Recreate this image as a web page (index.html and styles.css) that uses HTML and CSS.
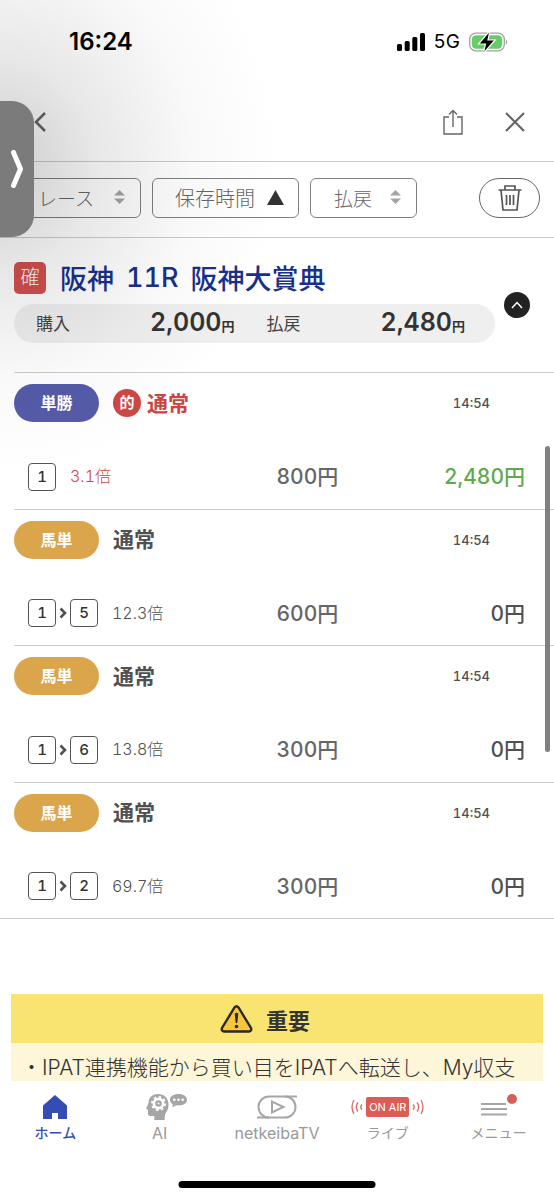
FILE: index.html
```
<!DOCTYPE html>
<html lang="ja">
<head>
    <meta charset="UTF-8">
    <meta name="viewport" content="width=device-width, initial-scale=1.0">
    <title>My収支</title>
    <link rel="stylesheet" href="styles.css">
</head>
<body>
    <div class="status-bar">
        <span class="clock">16:24</span>
        <div class="status-icons">
            <svg width="28" height="18" viewBox="0 0 28 18">
                <rect x="0" y="11" width="5" height="7" rx="1.5"/>
                <rect x="7.7" y="8" width="5" height="10" rx="1.5"/>
                <rect x="15.3" y="4" width="5" height="14" rx="1.5"/>
                <rect x="23" y="0" width="5" height="18" rx="1.5"/>
            </svg>
            <span class="network">5G</span>
            <svg width="39" height="20" viewBox="0 0 39 20">
                <rect x="0.7" y="1.2" width="34.6" height="17.6" rx="6" fill="#fff" stroke="#a2a2a2" stroke-width="1.3"/>
                <rect x="2.8" y="3.2" width="30.4" height="13.6" rx="4.2" fill="#66cc6a"/>
                <path d="M36.8 7.2c1.8 1 1.8 4.6 0 5.6z" fill="#a2a2a2"/>
                <path d="M20 .8 10.8 11.4h6.4L15.4 19.2 24.8 8.6h-6.6z" stroke="#fff" stroke-width="2.4" paint-order="stroke"/>
            </svg>
        </div>
    </div>

    <header class="header">
        <button class="icon-button" aria-label="戻る">
            <svg width="12" height="20" viewBox="0 0 12 20" class="line"><path d="M11 1 2 10l9 9" stroke-width="2.6"/></svg>
        </button>
        <div class="header-actions">
            <button class="icon-button" aria-label="共有">
                <svg width="20" height="26" viewBox="0 0 20 26" class="line"><path d="M6 8H1v17h18V8h-5M10 18V1.500M6 5.500l4-4 4 4" stroke-width="1.4"/></svg>
            </button>
            <button class="icon-button" aria-label="閉じる">
                <svg width="20" height="20" viewBox="0 0 20 20" class="line"><path d="m1 1 18 18M19 1 1 19" stroke-width="2.2"/></svg>
            </button>
        </div>
    </header>

    <div class="filters">
        <button class="filter filter-narrow">レース
            <svg width="11" height="14" viewBox="0 0 11 14" fill="#a5a5a5"><path d="M0 5.500 5.500 0 11 5.500zM0 8.500h11L5.500 14z"/></svg>
        </button>
        <button class="filter filter-wide">保存時間
            <svg width="17" height="15" viewBox="0 0 17 15" fill="#333"><path d="M8.500 0 17 15H0z"/></svg>
        </button>
        <button class="filter">払戻
            <svg width="11" height="14" viewBox="0 0 11 14" fill="#a5a5a5"><path d="M0 5.500 5.500 0 11 5.500zM0 8.500h11L5.500 14z"/></svg>
        </button>
        <button class="trash" aria-label="削除">
            <svg width="24" height="26" viewBox="0 0 24 26" class="line"><path d="M.5 5h23M7 5V1h10v4M3 5l2 20h14l2-20M8.500 10v10M12 10v10M15.500 10v10" stroke-width="1.7"/></svg>
        </button>
    </div>

    <main class="content">
        <section class="race">
            <div class="race-info">
                <h1>
                    <span class="fixed-mark">確</span>
                    <span>阪神</span>
                    <span>11R</span>
                    <span>阪神大賞典</span>
                </h1>
                <dl class="totals">
                    <dt>購入</dt>
                    <dd>2,000<small>円</small></dd>
                    <dt>払戻</dt>
                    <dd>2,480<small>円</small></dd>
                </dl>
            </div>
            <button class="collapse" aria-label="閉じる">
                <svg width="12" height="8" viewBox="0 0 12 8" class="line"><path d="m1 7 5-5.500L11 7" stroke-width="1.5"/></svg>
            </button>
        </section>

        <div class="bets">
            <article class="bet">
                <div class="bet-head">
                    <span class="pill win">単勝</span>
                    <span class="hit-mark">的</span>
                    <span class="kind hit">通常</span>
                    <time>14:54</time>
                </div>
                <div class="bet-detail">
                    <div class="pick"><span class="num">1</span><span class="odds hit">3.1倍</span></div>
                    <span class="amount">800円</span>
                    <span class="payout paid">2,480円</span>
                </div>
            </article>

            <article class="bet">
                <div class="bet-head">
                    <span class="pill">馬単</span>
                    <span class="kind">通常</span>
                    <time>14:54</time>
                </div>
                <div class="bet-detail">
                    <div class="pick">
                        <span class="num">1</span>
                        <svg width="8" height="12" viewBox="0 0 8 12" class="line"><path d="m1.500 1.500 4.500 4.500-4.500 4.500" stroke-width="2.6"/></svg>
                        <span class="num">5</span>
                        <span class="odds">12.3倍</span>
                    </div>
                    <span class="amount">600円</span>
                    <span class="payout">0円</span>
                </div>
            </article>

            <article class="bet">
                <div class="bet-head">
                    <span class="pill">馬単</span>
                    <span class="kind">通常</span>
                    <time>14:54</time>
                </div>
                <div class="bet-detail">
                    <div class="pick">
                        <span class="num">1</span>
                        <svg width="8" height="12" viewBox="0 0 8 12" class="line"><path d="m1.500 1.500 4.500 4.500-4.500 4.500" stroke-width="2.6"/></svg>
                        <span class="num">6</span>
                        <span class="odds">13.8倍</span>
                    </div>
                    <span class="amount">300円</span>
                    <span class="payout">0円</span>
                </div>
            </article>

            <article class="bet">
                <div class="bet-head">
                    <span class="pill">馬単</span>
                    <span class="kind">通常</span>
                    <time>14:54</time>
                </div>
                <div class="bet-detail">
                    <div class="pick">
                        <span class="num">1</span>
                        <svg width="8" height="12" viewBox="0 0 8 12" class="line"><path d="m1.500 1.500 4.500 4.500-4.500 4.500" stroke-width="2.6"/></svg>
                        <span class="num">2</span>
                        <span class="odds">69.7倍</span>
                    </div>
                    <span class="amount">300円</span>
                    <span class="payout">0円</span>
                </div>
            </article>
        </div>

        <section class="notice">
            <h2>
                <svg width="33" height="28" viewBox="0 0 33 28">
                    <path d="M14.500 2.500q2-2.400 4 0L31 23q1 3-2 3.500H4Q1 26 2 23z" fill="#f7c63f" stroke="#2b2922" stroke-width="2.400"/>
                    <path d="M14.700 8.500q1.800-1.600 3.600 0L17.300 18h-1.600z" fill="#2b2922"/>
                    <circle cx="16.500" cy="21.500" r="1.800" fill="#2b2922"/>
                </svg>
                重要
            </h2>
            <p>・IPAT連携機能から買い目をIPATへ転送し、My収支</p>
        </section>
    </main>

    <nav class="tab-bar">
        <a href="#" class="tab active">
            <span class="tab-icon">
                <svg width="24" height="24" viewBox="0 0 24 24" fill="#364cb5"><path d="M12 0 24 10.500V24h-9v-6H9v6H0V10.500z"/></svg>
            </span>
            ホーム
        </a>
        <a href="#" class="tab tab-ai">
            <span class="tab-icon">
                <svg width="41" height="28" viewBox="0 0 41 28" fill="#a6a6a6">
                    <path d="M12 1C6 1 2.500 5 2.500 10L.3 15.200c-.3.800.2 1.200 1.700 1.300v4.200c0 1.500 1 2.200 2.500 2.200h3.800V27h10.500c-.6-4 .2-6 2-8.800 1.300-2 1.700-4.200 1.700-7C22.500 5 18 1 12 1z"/>
                    <circle cx="12.500" cy="10.500" r="4.600" fill="none" stroke="#fff" stroke-width="2.600"/>
                    <circle cx="12.500" cy="10.500" r="6.600" fill="none" stroke="#fff" stroke-width="1.800" stroke-dasharray="2.600 2.580"/>
                    <circle cx="12.500" cy="10.500" r="1" fill="#fff"/>
                    <path d="M32.500 1c-5 0-8.500 2.400-8.500 5.800 0 2 1.200 3.700 3 4.700L26 14.300l5-2c6 .6 10-2 10-5.500S37.500 1 32.500 1z"/>
                    <g fill="#fff"><circle cx="28.300" cy="6.800" r="1.300"/><circle cx="32.500" cy="6.800" r="1.300"/><circle cx="36.700" cy="6.800" r="1.300"/></g>
                </svg>
            </span>
            <span class="tab-label">AI</span>
        </a>
        <a href="#" class="tab tab-latin">
            <span class="tab-icon">
                <svg width="40" height="24" viewBox="0 0 40 24" fill="none" stroke="#a6a6a6" stroke-width="2">
                    <rect x="1.500" y="1.500" width="37" height="21" rx="10.500"/>
                    <path d="M28 1.500h12M0 22.500h12"/>
                    <path d="M15 6.500v11L26.500 12z"/>
                </svg>
            </span>
            netkeibaTV
        </a>
        <a href="#" class="tab">
            <span class="tab-icon on-air">
                <svg width="12" height="16" viewBox="0 0 12 16"><path d="M3 1Q-1 8 3 15M7 3.500Q3.500 8 7 12.500M11 5.500Q8.500 8 11 10.500"/></svg>
                <span>ON AIR</span>
                <svg width="12" height="16" viewBox="0 0 12 16"><path d="M1 5.500Q3.500 8 1 10.500M5 3.500Q8.500 8 5 12.500M9 1Q13 8 9 15"/></svg>
            </span>
            ライブ
        </a>
        <a href="#" class="tab">
            <span class="tab-icon">
                <svg width="37" height="30" viewBox="0 0 37 30">
                    <path d="M1 12h25M1 17h26M1 22.500h26" stroke="#a6a6a6" stroke-width="1.800"/>
                    <circle cx="32" cy="7" r="5" fill="#d4605b"/>
                </svg>
            </span>
            メニュー
        </a>
    </nav>

    <div class="scroll-thumb"></div>
    <div class="edge-shade"></div>
    <button class="drawer-handle" aria-label="開く">
        <svg width="12" height="38" viewBox="0 0 12 38"><path d="m2.500 2.500 7 16.500-7 16.500"/></svg>
    </button>
    <div class="home-indicator"></div>
</body>
</html>
```
FILE: styles.css
```
* {
    box-sizing: border-box;
}

body {
    position: relative;
    display: flex;
    flex-direction: column;
    height: 100vh;
    margin: 0;
    overflow: hidden;
    background-color: #fff;
    color: #505050;
    font-family: Inter, "Noto Sans CJK JP", sans-serif;
    font-variant-numeric: tabular-nums;
}

h1, h2, p, dl, dd {
    margin: 0;
}

button {
    padding: 0;
    border: none;
    background: none;
    color: inherit;
    font-family: inherit;
    cursor: pointer;
}

svg {
    display: block;
    flex: none;
}

.line {
    fill: none;
    stroke: currentColor;
}

/* Status bar */
.status-bar {
    display: flex;
    flex: none;
    justify-content: space-between;
    align-items: center;
    height: 83px;
    padding: 0 46px 0 69px;
    color: #000;
}

.clock {
    font-size: 24px;
    font-weight: 600;
    font-variant-numeric: normal;
}

.status-icons {
    display: flex;
    align-items: center;
    gap: 9px;
}

.network {
    font-size: 19px;
}

/* Header */
.header {
    display: flex;
    flex: none;
    justify-content: space-between;
    align-items: center;
    height: 79px;
    padding: 0 29px 0 34px;
    border-bottom: 1px solid #ccc;
    color: #666;
}

.header-actions {
    display: flex;
    align-items: center;
    gap: 42px;
}

/* Sort buttons */
.filters {
    display: flex;
    flex: none;
    align-items: center;
    gap: 11px;
    height: 76px;
    padding: 0 14px 3px;
    border-bottom: 1px solid #ccc;
}

.filter {
    display: flex;
    justify-content: center;
    align-items: center;
    gap: 18px;
    width: 107px;
    height: 40px;
    padding: 0 0 2px 8px;
    border: 1px solid #808080;
    border-radius: 6px;
    color: #666;
    font-size: 19px;
    font-weight: 300;
}

.filter-narrow {
    width: 127px;
    gap: 20px;
}

.filter-wide {
    width: 147px;
    gap: 12px;
    font-size: 20px;
}

.trash {
    display: flex;
    justify-content: center;
    align-items: center;
    width: 61px;
    height: 40px;
    margin-left: auto;
    border: 1px solid #666;
    border-radius: 20px;
    color: #555;
}

/* Race summary */
.content {
    flex: 1;
    min-height: 0;
    overflow: hidden;
}

.race {
    display: flex;
    align-items: center;
    gap: 9px;
    height: 134px;
    padding: 0 24px 0 14px;
}

.race-info {
    flex: 1;
    padding-bottom: 10px;
}

.race h1 {
    display: flex;
    align-items: center;
    gap: 12px;
    height: 40px;
    color: #18308a;
    font-size: 27px;
    font-weight: 500;
    white-space: nowrap;
}

.race h1 .fixed-mark {
    width: 32px;
    height: 32px;
    margin-right: 2px;
    border-radius: 5px;
    background-color: #d2504d;
    color: #fff;
    font-size: 19px;
    font-weight: 300;
    line-height: 32px;
    text-align: center;
}

.totals {
    display: grid;
    grid-template-columns: auto 1fr auto 1fr;
    align-items: center;
    height: 39px;
    margin-top: 6px;
    padding: 0 30px 2px 22px;
    border-radius: 20px;
    background-color: #efefef;
}

.totals dt {
    color: #444;
    font-size: 17px;
}

.totals dd {
    color: #333;
    font-size: 25px;
    font-weight: 600;
    text-align: right;
}

.totals dd + dt {
    margin-left: 32px;
}

.totals small {
    font-size: 13px;
}

.collapse {
    display: flex;
    justify-content: center;
    align-items: center;
    width: 26px;
    height: 26px;
    border-radius: 50%;
    background-color: #222;
    color: #fff;
}

/* Bets */
.bets {
    display: grid;
    grid-auto-rows: 1fr;
    min-height: 547px;
    border-bottom: 1px solid #ccc;
}

.bet {
    margin-left: 14px;
    border-top: 1px solid #ccc;
}

.bet-head {
    display: flex;
    align-items: center;
    height: 38px;
    margin-top: 11px;
    padding-right: 64px;
}

.pill {
    width: 85px;
    margin-right: 14px;
    border-radius: 19px;
    background-color: #dba54b;
    color: #fff;
    font-size: 16px;
    font-weight: 700;
    line-height: 38px;
    text-align: center;
}

.win {
    background-color: #555ba8;
}

.hit-mark {
    width: 28px;
    margin-right: 6px;
    border-radius: 50%;
    background-color: #ce4844;
    color: #fff;
    font-size: 15px;
    font-weight: 700;
    line-height: 28px;
    text-align: center;
}

.kind {
    padding-bottom: 3px;
    font-size: 21px;
    font-weight: 700;
}

.kind.hit, .odds.hit {
    color: #cb4542;
}

.bet time {
    margin-left: auto;
    font-size: 13px;
    font-weight: 500;
}

.bet-detail {
    display: grid;
    grid-template-columns: 2fr 1fr 1fr;
    align-items: center;
    height: 30px;
    margin-top: 38px;
    padding: 0 29px 0 14px;
}

.pick {
    display: flex;
    align-items: center;
    gap: 3px;
}

.num {
    width: 28px;
    height: 28px;
    border: 1px solid #555;
    border-radius: 4px;
    color: #333;
    font-size: 15px;
    font-weight: 500;
    line-height: 26px;
    text-align: center;
}

.odds {
    margin-left: 11px;
    padding-bottom: 3px;
    font-size: 16px;
    font-weight: 300;
}

.amount, .payout {
    padding-bottom: 3px;
    font-size: 21px;
    font-weight: 500;
    color: #666;
}

.payout {
    color: #505050;
    text-align: right;
}

.payout.paid {
    color: #61a84f;
}

/* Notice */
.notice {
    margin: 75px 11px 0;
    background-color: #fdf6d9;
    color: #333;
}

.notice h2 {
    display: flex;
    justify-content: center;
    align-items: center;
    gap: 13px;
    height: 49px;
    padding-right: 24px;
    background-color: #fae471;
    font-size: 22px;
    font-weight: 700;
}

.notice p {
    padding: 0 10px;
    font-size: 21px;
    font-weight: 300;
    line-height: 49px;
    white-space: nowrap;
}

/* Tab bar */
.tab-bar {
    display: flex;
    flex: none;
    height: 119px;
    background-color: #fff;
}

.tab {
    flex: 1;
    display: flex;
    flex-direction: column;
    align-items: center;
    color: #999;
    font-size: 14px;
    line-height: 22px;
    text-decoration: none;
    white-space: nowrap;
}

.tab.active {
    color: #364cb5;
    font-weight: 500;
}

.tab-ai, .tab-latin {
    font-size: 16px;
}

.tab-label {
    padding-right: 13px;
}

.tab-icon {
    display: flex;
    justify-content: center;
    align-items: center;
    height: 30px;
    margin: 11px 0 0;
}

.on-air {
    gap: 3px;
}

.on-air span {
    width: 43px;
    border-radius: 2px;
    background-color: #dc5d56;
    color: #fff;
    font-size: 11px;
    line-height: 20px;
    text-align: center;
}

.on-air svg {
    fill: none;
    stroke: #dc6660;
    stroke-width: 1.3;
}

/* Things that float over the page */
.scroll-thumb {
    position: absolute;
    top: 446px;
    right: 4px;
    width: 5px;
    height: 306px;
    border-radius: 3px;
    background-color: #808080;
}

.edge-shade {
    position: absolute;
    top: 0;
    left: 0;
    width: 300px;
    height: 500px;
    background: radial-gradient(280px 310px at 0 165px, rgba(0, 0, 0, 0.2), rgba(0, 0, 0, 0.09) 35%, rgba(0, 0, 0, 0.025) 70%, transparent);
    pointer-events: none;
}

.drawer-handle {
    position: absolute;
    top: 101px;
    left: 0;
    display: flex;
    align-items: center;
    width: 34px;
    height: 136px;
    padding-left: 11px;
    border-radius: 0 22px 22px 0;
    background-color: #7b7b7b;
}

.drawer-handle path {
    fill: none;
    stroke: #fff;
    stroke-width: 5;
    stroke-linecap: round;
    stroke-linejoin: round;
}

.home-indicator {
    position: absolute;
    bottom: 12px;
    left: 50%;
    width: 197px;
    height: 7px;
    border-radius: 4px;
    background-color: #000;
    transform: translateX(-50%);
}
```
